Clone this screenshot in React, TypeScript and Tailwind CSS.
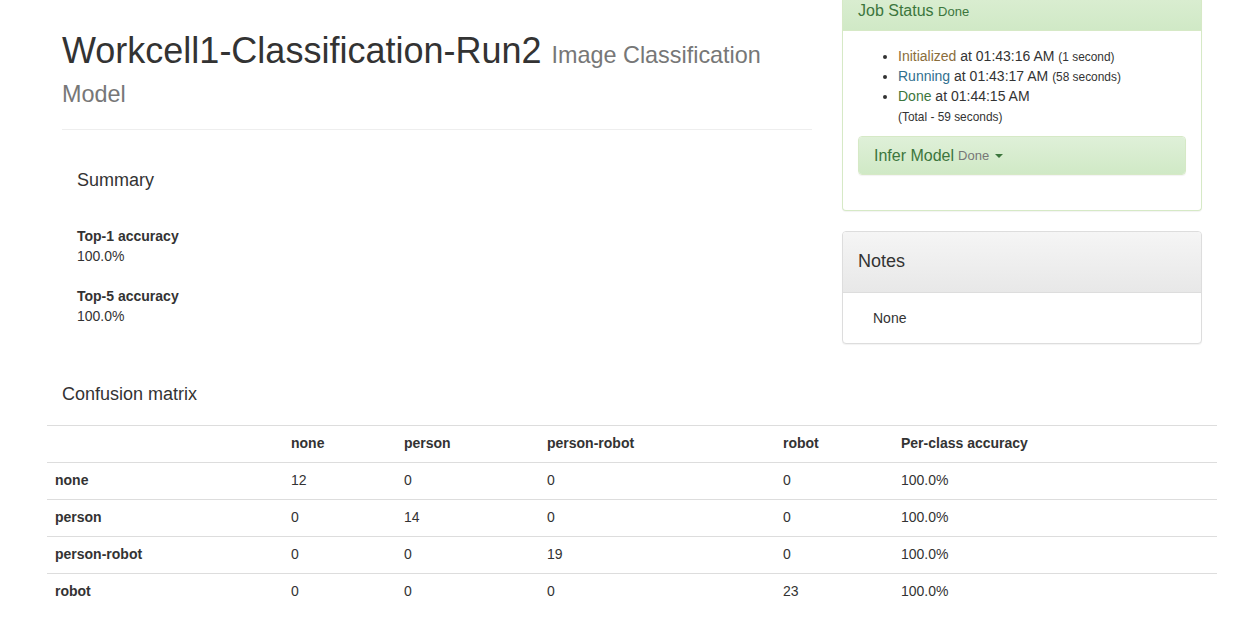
import React from "react";

const rows: { label: string; vals: number[]; acc: string }[] = [
  { label: "none", vals: [12, 0, 0, 0], acc: "100.0%" },
  { label: "person", vals: [0, 14, 0, 0], acc: "100.0%" },
  { label: "person-robot", vals: [0, 0, 19, 0], acc: "100.0%" },
  { label: "robot", vals: [0, 0, 0, 23], acc: "100.0%" },
];

export default function App() {
  return (
    <div className="min-h-[631px] bg-white font-['Liberation_Sans',Arial,sans-serif] text-[14px] leading-[20px] text-[#333]">
      <div className="ml-[47px] w-[1170px]">
        <div className="flex items-start">
          {/* Left column */}
          <div className="w-[780px] px-[15px]">
            <div className="border-b border-[#eee] pt-[31px] pb-[10px]">
              <h1 className="mb-[10px] text-[36px] font-normal leading-[39px] text-[#333]">
                Workcell1-Classification-Run2{" "}
                <span className="text-[23.4px] leading-none text-[#777]">Image Classification Model</span>
              </h1>
            </div>
            <div className="px-[15px]">
              <h4 className="mt-[41px] text-[18px] font-normal leading-[19.8px]">Summary</h4>
              <dl className="mt-[35px]">
                <dt className="font-bold">Top-1 accuracy</dt>
                <dd>100.0%</dd>
                <dt className="mt-[20px] font-bold">Top-5 accuracy</dt>
                <dd>100.0%</dd>
              </dl>
            </div>
          </div>

          {/* Right column */}
          <div className="w-[390px] px-[15px]">
            <div className="mb-[20px] rounded-b-[4px] border-x border-b border-[#d6e9c6] bg-white shadow-[0_1px_1px_rgba(0,0,0,0.05)]">
              <div className="border-b border-[#d6e9c6] bg-gradient-to-b from-[#d9edd0] to-[#d0e9c6] px-[15px] pt-[2px] pb-[10px] text-[#3c763d]">
                <h3 className="text-[16px] font-normal leading-[18px]">
                  Job Status <span className="text-[13px] leading-none">Done</span>
                </h3>
              </div>
              <div className="p-[15px]">
                <ul className="mb-[10px] list-disc pl-[40px]">
                  <li className="h-[20px]">
                    <span className="text-[#8a6d3b]">Initialized</span> at 01:43:16 AM{" "}
                    <small className="text-[11.9px] leading-none">(1 second)</small>
                  </li>
                  <li className="h-[20px]">
                    <span className="text-[#31708f]">Running</span> at 01:43:17 AM{" "}
                    <small className="text-[11.9px] leading-none">(58 seconds)</small>
                  </li>
                  <li>
                    <div className="h-[20px]">
                      <span className="text-[#3c763d]">Done</span> at 01:44:15 AM
                    </div>
                    <div className="h-[20px]">
                      <small className="text-[11.9px] leading-none">(Total - 59 seconds)</small>
                    </div>
                  </li>
                </ul>
                <div className="mb-[20px] rounded-[4px] border border-[#d6e9c6] shadow-[0_1px_1px_rgba(0,0,0,0.05)]">
                  <div className="flex h-[37px] items-center rounded-[3px] bg-gradient-to-b from-[#dff0d8] to-[#d0e9c6] px-[15px] text-[#3c763d]">
                    <span className="text-[16px] leading-[17.6px]">Infer Model</span>
                    <span className="ml-[4px] text-[13px] leading-[17.6px] text-[#777]">Done</span>
                    <span className="ml-[6px] mt-[1px] h-0 w-0 border-x-[4px] border-t-[4px] border-x-transparent border-t-[#3c763d]" />
                  </div>
                </div>
              </div>
            </div>

            <div className="mb-[20px] rounded-[4px] border border-[#ddd] bg-white shadow-[0_1px_1px_rgba(0,0,0,0.05)]">
              <div className="rounded-t-[3px] border-b border-[#ddd] bg-gradient-to-b from-[#f5f5f5] to-[#e8e8e8] px-[15px] py-[10px]">
                <h4 className="my-[10px] text-[18px] font-normal leading-[19.8px]">Notes</h4>
              </div>
              <div className="p-[15px]">
                <p className="pl-[15px]">None</p>
              </div>
            </div>
          </div>
        </div>

        {/* Confusion matrix */}
        <h4 className="mt-[20px] mb-[21px] px-[15px] text-[18px] font-normal leading-[20px]">Confusion matrix</h4>
        <table className="w-[1170px] table-fixed border-collapse">
          <colgroup>
            <col className="w-[236px]" />
            <col className="w-[113px]" />
            <col className="w-[143px]" />
            <col className="w-[236px]" />
            <col className="w-[118px]" />
            <col className="w-[324px]" />
          </colgroup>
          <thead>
            <tr className="border-t border-[#ddd]">
              <th className="px-[8px] pt-[7px] pb-[9px] text-left"></th>
              <th className="px-[8px] pt-[7px] pb-[9px] text-left font-bold">none</th>
              <th className="px-[8px] pt-[7px] pb-[9px] text-left font-bold">person</th>
              <th className="px-[8px] pt-[7px] pb-[9px] text-left font-bold">person-robot</th>
              <th className="px-[8px] pt-[7px] pb-[9px] text-left font-bold">robot</th>
              <th className="px-[8px] pt-[7px] pb-[9px] text-left font-bold">Per-class accuracy</th>
            </tr>
          </thead>
          <tbody>
            {rows.map((r) => (
              <tr key={r.label} className="border-t border-[#ddd]">
                <th className="px-[8px] pt-[7px] pb-[9px] text-left font-bold">{r.label}</th>
                {r.vals.map((v, i) => (
                  <td key={i} className="px-[8px] pt-[7px] pb-[9px]">
                    {v}
                  </td>
                ))}
                <td className="px-[8px] pt-[7px] pb-[9px]">{r.acc}</td>
              </tr>
            ))}
          </tbody>
        </table>
      </div>
    </div>
  );
}
